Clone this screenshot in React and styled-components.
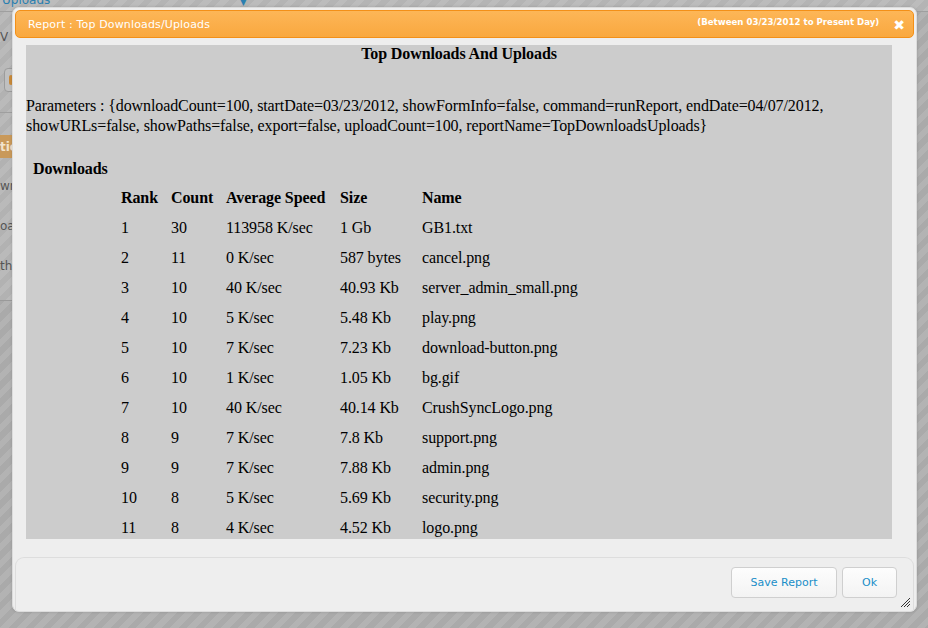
import React from "react";
import styled, { createGlobalStyle } from "styled-components";

const GlobalStyle = createGlobalStyle`
  html, body { margin: 0; padding: 0; overflow: hidden; }
  #root { width: 928px; height: 628px; }
`;

const Page = styled.div`
  position: relative;
  width: 928px;
  height: 628px;
  overflow: hidden;
  background: repeating-linear-gradient(
    135deg,
    #b3b3b3 0px,
    #b3b3b3 6px,
    #aaaaaa 6px,
    #aaaaaa 12px
  );
  font-family: "DejaVu Sans", Verdana, sans-serif;
`;

const TopStrip = styled.div`
  height: 12px;
  display: flex;
  align-items: flex-start;
  background: rgba(255, 255, 255, 0.12);
  border-bottom: 1px solid #9f9f9f;
  box-sizing: border-box;
`;

const TopLabel = styled.span`
  color: #2a7fb0;
  font-size: 12px;
  line-height: 12px;
  margin-top: -6px;
  padding-left: 2px;
`;

const TopIcon = styled.span`
  margin-left: 190px;
  width: 10px;
  height: 7px;
  color: #2a7fb0;
  font-size: 8px;
  line-height: 6px;
`;

const SideRows = styled.div`
  width: 60px;
  display: flex;
  flex-direction: column;
  background: rgba(255, 255, 255, 0.1);
  height: 288px;
  border-bottom: 1px solid #9a9a9a;
`;

const SideBlock = styled.div`
  display: flex;
  flex-direction: column;
  border-bottom: 1px solid #9f9f9f;
  padding-bottom: 20px;
`;

const SideText = styled.div`
  height: ${(p) => p.h}px;
  font-size: 12px;
  color: #555;
  display: flex;
  align-items: center;
  box-sizing: border-box;
`;

const SideButton = styled.div`
  margin: 6px 0 0 4px;
  height: 24px;
  width: 40px;
  border: 1px solid #9c9c9c;
  border-radius: 4px;
  background: #c0c0c0;
  display: flex;
  align-items: center;
  padding-left: 4px;
  box-sizing: border-box;
`;

const SideDot = styled.span`
  width: 4px;
  height: 10px;
  border-radius: 2px;
  background: #c98a3a;
`;

const SideBar = styled.div`
  height: 23px;
  margin: 22px 0 8px 0;
  background: #c9995a;
  color: #f2e3cc;
  font-size: 12px;
  font-weight: bold;
  display: flex;
  align-items: center;
`;

const Dialog = styled.div`
  position: absolute;
  left: 12px;
  top: 7px;
  width: 905px;
  height: 605px;
  box-sizing: border-box;
  padding: 2px 2px 0 2px;
  background: #eeeeee;
  border: 1px solid #dcdcdc;
  border-radius: 7px;
  box-shadow: 0 0 3px rgba(0, 0, 0, 0.15);
  display: flex;
  flex-direction: column;
`;

const Header = styled.div`
  height: 28px;
  box-sizing: border-box;
  border: 1px solid #f39018;
  border-radius: 5px;
  background: linear-gradient(#fdb657, #f9a83f);
  display: flex;
  align-items: center;
  padding: 0 8px 0 12px;
  color: #ffffff;
`;

const Title = styled.span`
  font-size: 11px;
  letter-spacing: 0.15px;
  flex: 1;
`;

const SubTitle = styled.span`
  align-self: flex-start;
  margin-top: 6px;
  font-size: 8.6px;
  font-weight: bold;
  margin-right: 14px;
`;

const Close = styled.span`
  font-size: 14px;
  font-weight: bold;
  line-height: 14px;
  margin-top: 2px;
`;

const Content = styled.div`
  margin: 7px 22px 0 11px;
  height: 494px;
  background: #cccccc;
  overflow: hidden;
  font-family: "Liberation Serif", "Times New Roman", serif;
  font-size: 16px;
  letter-spacing: -0.1px;
  color: #000;
`;

const ReportTitle = styled.div`
  text-align: center;
  font-weight: bold;
  line-height: 18px;
`;

const Params = styled.div`
  margin-top: 33px;
  line-height: 20px;
`;

const Section = styled.div`
  margin-top: 23px;
  padding-left: 7px;
  font-weight: bold;
  line-height: 20px;
`;

const Table = styled.div`
  margin: 4px 0 0 95px;
  display: grid;
  grid-template-columns: 50px 55px 114px 82px auto;
  grid-auto-rows: 30px;
  align-items: center;
`;

const Cell = styled.div`
  font-weight: ${(p) => (p.head ? "bold" : "normal")};
  white-space: nowrap;
  line-height: 20px;
`;

const Footer = styled.div`
  position: relative;
  margin-top: 18px;
  flex: 1;
  border: 1px solid #dddddd;
  border-bottom: none;
  border-radius: 9px 9px 0 0;
  display: flex;
  justify-content: flex-end;
  align-items: flex-start;
  padding: 9px 16px 0 0;
  gap: 5px;
`;

const Button = styled.button`
  height: 31px;
  width: ${(p) => p.w}px;
  border: 1px solid #cfcfcf;
  border-radius: 4px;
  background: linear-gradient(#fdfdfd, #f3f3f3);
  color: #1a8ec8;
  font-family: "DejaVu Sans", Verdana, sans-serif;
  font-size: 11px;
  padding: 0;
  cursor: pointer;
`;

const Grip = styled.svg`
  position: absolute;
  right: 2px;
  bottom: 3px;
`;

const rows = [
  ["1", "30", "113958 K/sec", "1 Gb", "GB1.txt"],
  ["2", "11", "0 K/sec", "587 bytes", "cancel.png"],
  ["3", "10", "40 K/sec", "40.93 Kb", "server_admin_small.png"],
  ["4", "10", "5 K/sec", "5.48 Kb", "play.png"],
  ["5", "10", "7 K/sec", "7.23 Kb", "download-button.png"],
  ["6", "10", "1 K/sec", "1.05 Kb", "bg.gif"],
  ["7", "10", "40 K/sec", "40.14 Kb", "CrushSyncLogo.png"],
  ["8", "9", "7 K/sec", "7.8 Kb", "support.png"],
  ["9", "9", "7 K/sec", "7.88 Kb", "admin.png"],
  ["10", "8", "5 K/sec", "5.69 Kb", "security.png"],
  ["11", "8", "4 K/sec", "4.52 Kb", "logo.png"],
];

const head = ["Rank", "Count", "Average Speed", "Size", "Name"];

const paramsText =
  "Parameters : {downloadCount=100, startDate=03/23/2012, showFormInfo=false, command=runReport, endDate=04/07/2012, showURLs=false, showPaths=false, export=false, uploadCount=100, reportName=TopDownloadsUploads}";

export default function App() {
  return (
    <Page>
      <GlobalStyle />
      <TopStrip>
        <TopLabel>Uploads</TopLabel>
        <TopIcon>▼</TopIcon>
      </TopStrip>
      <SideRows>
        <SideBlock>
          <SideText h={50}>V</SideText>
          <SideButton>
            <SideDot />
          </SideButton>
        </SideBlock>
        <SideBar>tio</SideBar>
        <SideText h={40}>wn</SideText>
        <SideText h={40}>oa</SideText>
        <SideText h={40}>ths</SideText>
      </SideRows>

      <Dialog>
        <Header>
          <Title>Report : Top Downloads/Uploads</Title>
          <SubTitle>(Between 03/23/2012 to Present Day)</SubTitle>
          <Close>✖</Close>
        </Header>
        <Content>
          <ReportTitle>Top Downloads And Uploads</ReportTitle>
          <Params>{paramsText}</Params>
          <Section>Downloads</Section>
          <Table>
            {head.map((h) => (
              <Cell head key={h}>
                {h}
              </Cell>
            ))}
            {rows.map((r) =>
              r.map((c, i) => <Cell key={r[0] + "-" + i}>{c}</Cell>)
            )}
          </Table>
        </Content>
        <Footer>
          <Button w={106}>Save Report</Button>
          <Button w={55}>Ok</Button>
          <Grip width="11" height="11" viewBox="0 0 11 11">
            <path
              d="M1 10 L10 1 M4 10 L10 4 M7 10 L10 7"
              stroke="#333"
              strokeWidth="1"
              fill="none"
            />
          </Grip>
        </Footer>
      </Dialog>
    </Page>
  );
}
